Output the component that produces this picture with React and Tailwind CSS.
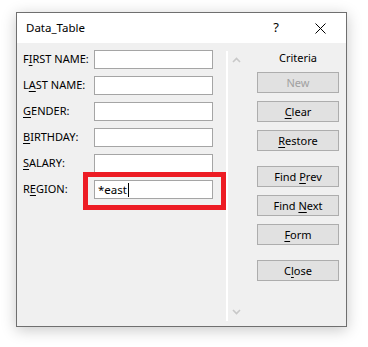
import React from 'react';

const font = { fontFamily: '"Noto Sans", "Liberation Sans", sans-serif' };

// label with one underlined access key
const Key = ({ pre = '', k, post = '' }) => (
  <span>
    {pre}
    <span className="underline underline-offset-2 decoration-1">{k}</span>
    {post}
  </span>
);

const fields = [
  { label: <Key pre="F" k="I" post="RST NAME:" /> },
  { label: <Key pre="L" k="A" post="ST NAME:" /> },
  { label: <Key k="G" post="ENDER:" /> },
  { label: <Key k="B" post="IRTHDAY:" /> },
  { label: <Key k="S" post="ALARY:" /> },
  { label: <Key pre="R" k="E" post="GION:" />, value: '*east', marked: true },
];

const Btn = ({ children, disabled, className = '' }) => (
  <button
    className={`h-[21px] w-[82px] border border-[#adadad] bg-[#e1e1e1] text-[11px] leading-[19px] ${
      disabled ? 'text-[#a0a0a0]' : 'text-black'
    } ${className}`}
  >
    {children}
  </button>
);

const Chevron = ({ up }) => (
  <svg width="9" height="6" viewBox="0 0 9 6" className="ml-[4px]">
    <path
      d={up ? 'M1 5 L4.5 1.5 L8 5' : 'M1 1 L4.5 4.5 L8 1'}
      fill="none"
      stroke="#c8c8c8"
      strokeWidth="1.6"
    />
  </svg>
);

export default function App() {
  return (
    <div className="w-[368px] h-[347px] bg-white pt-[12px] pl-[16px]" style={font}>
      <div className="w-[331px] h-[315px] border border-[#6f6f6f] bg-[#f0f0f0] flex flex-col shadow-[0_3px_14px_rgba(0,0,0,0.22)]">
        {/* title bar */}
        <div className="h-[30px] bg-white flex items-center text-black">
          <span className="ml-[9px] text-[11.5px]">Data_Table</span>
          <span className="ml-auto text-[13px] mr-[36px]">?</span>
          <svg width="11" height="11" viewBox="0 0 11 11" className="mr-[20px]">
            <path d="M0.5 0.5 L10.5 10.5 M10.5 0.5 L0.5 10.5" stroke="#000" strokeWidth="1" />
          </svg>
        </div>

        <div className="flex flex-1">
          {/* fields */}
          <div className="flex flex-col gap-[7px] pt-[7px] pl-[6px]">
            {fields.map((f, i) => (
              <div key={i} className="relative flex items-center h-[19px]">
                <span className="w-[71px] text-[11px] text-black">{f.label}</span>
                <div className="w-[119px] h-[19px] border border-[#a5a5a5] bg-white flex items-center pl-[3px] text-[11.5px] text-black">
                  {f.value}
                  {f.value && <span className="ml-[1px] w-px h-[14px] bg-black" />}
                </div>
                {f.marked && (
                  <div className="absolute left-[60px] top-[-8px] w-[143px] h-[38px] border-[5px] border-[#ed1c24]" />
                )}
              </div>
            ))}
          </div>

          {/* scroll bar */}
          <div className="ml-[13px] mt-[8px] h-[270px] w-[31px] border-l-2 border-white flex flex-col justify-between py-[6px]">
            <Chevron up />
            <Chevron />
          </div>

          {/* buttons */}
          <div className="flex flex-col items-center w-[82px] pt-[7px]">
            <span className="text-[11px] leading-[16px] text-black">Criteria</span>
            <Btn disabled className="mt-[6px]">New</Btn>
            <Btn className="mt-[8px]"><Key k="C" post="lear" /></Btn>
            <Btn className="mt-[8px]"><Key k="R" post="estore" /></Btn>
            <Btn className="mt-[15px]"><Key pre="Find " k="P" post="rev" /></Btn>
            <Btn className="mt-[8px]"><Key pre="Find " k="N" post="ext" /></Btn>
            <Btn className="mt-[8px]"><Key k="F" post="orm" /></Btn>
            <Btn className="mt-[15px]"><Key pre="C" k="l" post="ose" /></Btn>
          </div>
        </div>
      </div>
    </div>
  );
}
